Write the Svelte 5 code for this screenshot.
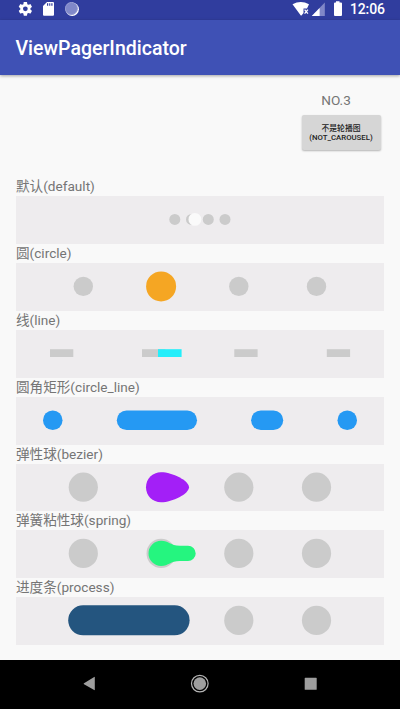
<script>
  const xs = [67.3, 145.1, 222.8, 300.5];
  const rows = [
    { name: '默认(default)', kind: 'default' },
    { name: '圆(circle)', kind: 'circle' },
    { name: '线(line)', kind: 'line' },
    { name: '圆角矩形(circle_line)', kind: 'circleLine' },
    { name: '弹性球(bezier)', kind: 'bezier' },
    { name: '弹簧粘性球(spring)', kind: 'spring' },
    { name: '进度条(process)', kind: 'process' }
  ];
</script>

<div class="screen">
  <div class="status">
    <svg class="left" width="64" height="20" viewBox="0 0 64 20">
      <g transform="translate(1.2 0.7) scale(0.68)">
        <path fill="#fff" d="M19.43 12.98c.04-.32.07-.64.07-.98s-.03-.66-.07-.98l2.11-1.65c.19-.15.24-.42.12-.64l-2-3.46c-.12-.22-.39-.3-.61-.22l-2.49 1c-.52-.4-1.08-.73-1.69-.98l-.38-2.65A.49.49 0 0 0 14 2h-4c-.25 0-.46.18-.49.42l-.38 2.65c-.61.25-1.17.59-1.69.98l-2.49-1c-.23-.09-.49 0-.61.22l-2 3.46c-.13.22-.07.49.12.64l2.11 1.65c-.04.32-.07.65-.07.98s.03.66.07.98l-2.11 1.65c-.19.15-.24.42-.12.64l2 3.46c.12.22.39.3.61.22l2.49-1c.52.4 1.08.73 1.69.98l.38 2.65c.03.24.24.42.49.42h4c.25 0 .46-.18.49-.42l.38-2.65c.61-.25 1.17-.59 1.69-.98l2.49 1c.23.09.49 0 .61-.22l2-3.46c.12-.22.07-.49-.12-.64zM12 15.5a3.5 3.5 0 1 1 0-7 3.5 3.5 0 0 1 0 7z" />
      </g>
      <path fill="#fff" fill-rule="evenodd" d="M31 2H37q1 0 1 1v11.700q0 1-1 1H28q-1 0-1-1V6zM31 3.300v2.400h1.200V3.300zM33.200 3.300v2.400h1.100V3.300zM35.300 3.300v2.400h1.200V3.300z" />
      <circle cx="56.200" cy="9.200" r="6.700" fill="#fff" />
      <circle cx="55.400" cy="8.500" r="6.400" fill="#8088c9" />
      <circle cx="55.400" cy="8.500" r="5.900" fill="none" stroke="#a7acda" stroke-width="1" stroke-dasharray="1 1" />
    </svg>
    <svg class="right" width="52" height="20" viewBox="0 0 52 20">
      <path fill="#fff" d="M.5 4.200Q8.800-.2 17 4.200L15 8.500H11.500V13L9.500 15.500H8.800z" />
      <path d="m12.600 9.700 3.300 4m0-4-3.300 4" stroke="#fff" stroke-width="1.300" />
      <path fill="#8087c8" d="M32.800 2.500V16H19.800z" />
      <path fill="#fff" d="M27.600 7.900V16h-7.800z" />
      <path fill="#fff" d="M44 1.200h3.500v1.300H49q1 0 1 1V15q0 1-1 1h-6q-1 0-1-1V3.500q0-1 1-1h1z" />
    </svg>
    <span class="time">12:06</span>
  </div>

  <header>ViewPagerIndicator</header>

  <main>
    <div class="top">
      <div class="number">NO.3</div>
      <button>不是轮播图<br />(NOT_CAROUSEL)</button>
    </div>

    {#each rows as row}
      <section>
        <div class="label">{row.name}</div>
        <svg class="bar" viewBox="0 0 368 47.860" preserveAspectRatio="none">
          {#if row.kind === 'default'}
            {#each [158.8, 175.5, 192.3, 209] as x}
              <circle class="dot" cx={x} cy="23.400" r="5.500" />
            {/each}
            <circle cx="178.900" cy="23.400" r="6.400" fill="#fafafa" />
          {:else if row.kind === 'circle'}
            {#each xs as x}
              <circle class="dot" cx={x} cy="23.400" r="9.700" />
            {/each}
            <circle cx="145.100" cy="23.400" r="15" fill="#f5a623" />
          {:else if row.kind === 'line'}
            {#each [34, 126, 218.3, 310.8] as x}
              <rect class="dot" {x} y="19.200" width="23.300" height="7.800" />
            {/each}
            <rect x="142" y="19.200" width="23.600" height="7.800" fill="#24eefa" />
          {:else if row.kind === 'circleLine'}
            {#each [[27, 19.5], [100.8, 80.2], [235.1, 32.1], [321.5, 19.5]] as [x, w]}
              <rect {x} y="13.400" width={w} height="19.700" rx="9.750" fill="#2599f3" />
            {/each}
          {:else if row.kind === 'bezier'}
            {#each xs as x}
              <circle class="dot" cx={x} cy="23.200" r="14.600" />
            {/each}
            <path fill="#a31ff7" d="M145.100 8.200C156.500 8.200 173 16.600 173 23.200S156.500 38.200 145.100 38.200C136.500 38.200 130 31.800 130 23.200S136.500 8.200 145.100 8.200Z" />
          {:else if row.kind === 'spring'}
            {#each xs as x}
              <circle class="dot" cx={x} cy="23.400" r="14.600" />
            {/each}
            <path fill="#25f57f" d="M145.100 10.800C153 10.800 154 15.700 164 15.700H172A7.700 7.700 0 0 1 172 31.100H164C154 31.100 153 36 145.100 36A12.600 12.600 0 0 1 145.100 10.800Z" />
          {:else}
            {#each xs as x}
              <circle class="dot" cx={x} cy="23.400" r="14.600" />
            {/each}
            <rect x="52.200" y="8.300" width="121.400" height="30" rx="15" fill="#24557f" />
          {/if}
        </svg>
      </section>
    {/each}
  </main>

  <nav>
    <svg width="400" height="49" viewBox="0 0 400 49">
      <path fill="#9e9e9e" d="M94.800 17.200v12.600q0 .6-.6.300L84 24.300q-.8-.5 0-1L94.200 17q.6-.4.600.2z" />
      <circle cx="199.800" cy="23.600" r="8.300" fill="none" stroke="#b5b5b5" stroke-width="1.200" />
      <circle cx="199.800" cy="23.600" r="6.300" fill="#9e9e9e" />
      <rect x="304.700" y="17.800" width="12" height="12" rx=".6" fill="#9e9e9e" />
    </svg>
  </nav>
</div>

<style>
  .screen {
    width: 400px;
    height: 709px;
    display: flex;
    flex-direction: column;
    overflow: hidden;
    background: #f9f9f9;
    font-family: Roboto, "Noto Sans CJK SC", sans-serif;
  }
  .status {
    height: 20px;
    flex: none;
    display: flex;
    box-sizing: border-box;
    padding: 0 16px;
    background: #303d9e;
    color: #fff;
  }
  .status svg {
    flex: none;
  }
  .right {
    margin-left: auto;
  }
  .time {
    width: 34px;
    margin-left: 6px;
    font-size: 14px;
    font-weight: 500;
    line-height: 19px;
    letter-spacing: -0.15px;
    white-space: nowrap;
  }
  header {
    height: 55px;
    flex: none;
    box-sizing: border-box;
    padding-left: 15.500px;
    background: #3f51b5;
    color: #fff;
    font-size: 19.550px;
    font-weight: 500;
    line-height: 57px;
    box-shadow: 0 1px 3px rgba(0, 0, 0, 0.35);
  }
  main {
    flex: 1;
    min-height: 0;
    padding: 0 16px;
  }
  .top {
    height: 102.150px;
    box-sizing: border-box;
    padding: 16px 3px 0 0;
    display: flex;
    flex-direction: column;
    align-items: flex-end;
  }
  .number {
    width: 79px;
    height: 24px;
    padding-right: 11px;
    box-sizing: border-box;
    color: #757575;
    font-size: 13.600px;
    line-height: 19px;
    text-align: center;
  }
  button {
    width: 79px;
    height: 35px;
    border: 0;
    border-radius: 2px;
    padding: 1px 1px 0 0;
    background: #d6d6d6;
    color: #222;
    font-family: inherit;
    font-size: 7.800px;
    font-weight: 500;
    line-height: 9.500px;
    white-space: nowrap;
    box-shadow: 0 1px 2px rgba(0, 0, 0, 0.28);
  }
  section {
    height: 66.860px;
  }
  .label {
    height: 19px;
    color: #757575;
    font-size: 13.600px;
    line-height: 19px;
    white-space: nowrap;
  }
  .bar {
    display: block;
    width: 368px;
    height: 47.860px;
    background: #eeecee;
  }
  .dot {
    fill: #cbcbcb;
  }
  nav {
    height: 49px;
    flex: none;
    background: #000;
  }
  nav svg {
    display: block;
  }
</style>
